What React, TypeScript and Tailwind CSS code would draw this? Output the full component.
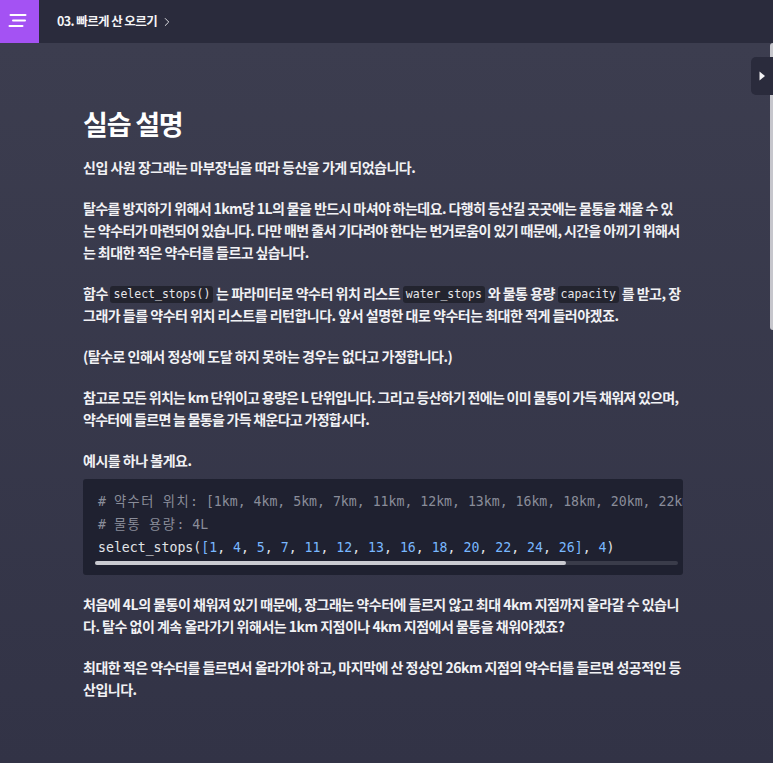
import React from "react";
import { ChevronRight } from "lucide-react";

const body = "'Noto Sans CJK KR', 'Noto Sans', sans-serif";
const mono = "'DejaVu Sans Mono', 'Noto Sans CJK KR', monospace";

function Code({ children }: { children: React.ReactNode }) {
  return (
    <code
      className="inline-block align-[1px] rounded-[3px] bg-[#23242f] px-[3px] text-[11.5px] leading-[17px] tracking-normal font-normal text-[#e6e6ea]"
      style={{ fontFamily: mono }}
    >
      {children}
    </code>
  );
}

const N = ({ children }: { children: React.ReactNode }) => (
  <span className="text-[#79b8ff]">{children}</span>
);
const K = ({ children }: { children: React.ReactNode }) => (
  <span className="tracking-[1.5px]">{children}</span>
);

export default function App() {
  const nums = ["1", "4", "5", "7", "11", "12", "13", "16", "18", "20", "22", "24", "26"];
  return (
    <div
      className="relative flex h-[763px] w-[773px] flex-col overflow-hidden"
      style={{ fontFamily: body }}
    >
      <header className="flex h-[43px] shrink-0 items-center bg-[#2a2b3c]">
        <div className="flex h-full w-[39px] items-center justify-center bg-[#a452f3]">
          <svg width="39" height="43" viewBox="0 0 39 43">
            <g stroke="#ffffff" strokeWidth="2" strokeLinecap="round">
              <line x1="10.5" y1="15" x2="25.5" y2="15" />
              <line x1="13" y1="20.5" x2="25" y2="20.5" />
              <line x1="9.5" y1="26" x2="22.5" y2="26" />
            </g>
          </svg>
        </div>
        <div className="ml-[18px] flex items-center gap-[3px] text-[12.5px] font-bold tracking-[-0.6px] text-[#f4f4f6]">
          <span>03. 빠르게 산 오르기</span>
          <ChevronRight size={14} strokeWidth={1.6} className="text-[#e8e8ec]" />
        </div>
      </header>

      <main className="flex-1 bg-linear-to-b from-[#3c3d4f] to-[#323346] pl-[83px] pt-[63px]">
        <div className="w-[600px] text-[14px] font-bold leading-[22px] tracking-[-0.5px] text-[#f1f1f4]">
          <h1 className="mb-[14px] text-[27px] leading-[36px] tracking-[-1.2px] text-white">
            실습 설명
          </h1>
          <p className="mb-[19px]">신입 사원 장그래는 마부장님을 따라 등산을 가게 되었습니다.</p>
          <p className="mb-[19px] tracking-[-0.6px]">
            탈수를 방지하기 위해서 1km당 1L의 물을 반드시 마셔야 하는데요. 다행히 등산길 곳곳에는 물통을 채울 수 있는 약수터가 마련되어 있습니다. 다만 매번 줄서 기다려야 한다는 번거로움이 있기 때문에, 시간을 아끼기 위해서는 최대한 적은 약수터를 들르고 싶습니다.
          </p>
          <p className="mb-[19px]">
            함수 <Code>select_stops()</Code> 는 파라미터로 약수터 위치 리스트 <Code>water_stops</Code> 와 물통 용량 <Code>capacity</Code> 를 받고, 장그래가 들를 약수터 위치 리스트를 리턴합니다. 앞서 설명한 대로 약수터는 최대한 적게 들러야겠죠.
          </p>
          <p className="mb-[19px]">(탈수로 인해서 정상에 도달 하지 못하는 경우는 없다고 가정합니다.)</p>
          <p className="mb-[19px] tracking-[-0.72px]">
            참고로 모든 위치는 km 단위이고 용량은 L 단위입니다. 그리고 등산하기 전에는 이미 물통이 가득 채워져 있으며, 약수터에 들르면 늘 물통을 가득 채운다고 가정합시다.
          </p>
          <p className="mb-[8px]">예시를 하나 볼게요.</p>

          <div className="mb-[18px] rounded-[3px] bg-[#1f2130] pt-[11px] pb-[10px]">
            <div
              className="overflow-hidden whitespace-pre pl-[15px] text-[13.2px] font-normal leading-[23px] tracking-normal text-[#e1e4e8]"
              style={{ fontFamily: mono }}
            >
              <div className="text-[#8a8d9a]"># <K>약수터</K> <K>위치</K>: [1km, 4km, 5km, 7km, 11km, 12km, 13km, 16km, 18km, 20km, 22km, 24km, 26km]</div>
              <div className="text-[#8a8d9a]"># <K>물통</K> <K>용량</K>: 4L</div>
              <div>
                select_stops(<N>[</N>
                {nums.map((n, i) => (
                  <React.Fragment key={n}>
                    <N>{n}</N>
                    {i < nums.length - 1 ? ", " : ""}
                  </React.Fragment>
                ))}
                <N>]</N>, <N>4</N>)
              </div>
            </div>
            <div className="ml-[12px] mr-[5px] mt-[2px] h-[4px] rounded-full bg-[#3a3c4a]">
              <div className="h-full w-[471px] rounded-full bg-[#c9cad0]" />
            </div>
          </div>

          <p className="mb-[19px]">
            처음에 4L의 물통이 채워져 있기 때문에, 장그래는 약수터에 들르지 않고 최대 4km 지점까지 올라갈 수 있습니다. 탈수 없이 계속 올라가기 위해서는 1km 지점이나 4km 지점에서 물통을 채워야겠죠?
          </p>
          <p>
            최대한 적은 약수터를 들르면서 올라가야 하고, 마지막에 산 정상인 26km 지점의 약수터를 들르면 성공적인 등산입니다.
          </p>
        </div>
      </main>

      <div className="absolute right-0 top-[43px] h-[287px] w-[3px] rounded-l-sm bg-[#c6c6cc]" />
      <div className="absolute right-0 top-[57px] flex h-[38px] w-[22px] items-center justify-center rounded-l-[5px] bg-[#2a2b3c]">
        <svg width="8" height="10" viewBox="0 0 8 10" className="mr-[1px]">
          <path d="M1.5 0.5 L7 5 L1.5 9.5 Z" fill="#f2f2f4" />
        </svg>
      </div>
    </div>
  );
}
